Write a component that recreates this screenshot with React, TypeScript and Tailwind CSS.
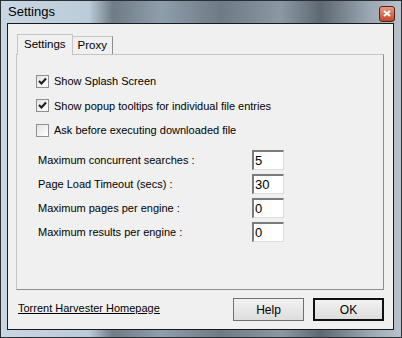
import React from "react";

const font = { fontFamily: '"Liberation Sans", Arial, sans-serif' };

const Check = ({ checked }: { checked: boolean }) => (
  <div className="w-[13px] h-[13px] border border-[#8f8f8f] bg-gradient-to-br from-[#e4e4e4] to-white flex items-center justify-center">
    {checked && (
      <svg width="9" height="9" viewBox="0 0 9 9">
        <path d="M1 4 L3.5 6.5 L8 1.5" stroke="#1b1b1b" strokeWidth="2" fill="none" />
      </svg>
    )}
  </div>
);

const NumField = ({ label, value }: { label: string; value: string }) => (
  <div className="flex items-center h-[19px]">
    <span className="w-[214px] text-[11px] text-black">{label}</span>
    <div className="w-[32px] h-[20px] bg-white border-t-2 border-l-2 border-b border-r border-t-[#7b7b7b] border-l-[#7b7b7b] border-b-[#dcdcdc] border-r-[#dcdcdc] text-[13px] leading-[17px] pl-[1px]">
      {value}
    </div>
  </div>
);

export default function App() {
  return (
    <div
      className="w-[402px] h-[338px] border border-[#2a2f36] flex flex-col bg-[linear-gradient(90deg,#c9d6e3_0%,#bccbd9_22%,#6f7b86_28%,#8f9eac_40%,#6e7a85_55%,#8b98a4_70%,#5d6872_80%,#9aa6b1_92%,#b7c2cc_100%)]"
      style={font}
    >
      <div className="h-[22px] flex items-center justify-between pl-[7px] pr-[6px]">
        <span className="text-[13px] text-black">Settings</span>
        <div className="w-[16px] h-[16px] rounded-[3px] border border-[#5a1f12] bg-gradient-to-b from-[#e89a84] to-[#c0472b] flex items-center justify-center mt-[3px]">
          <svg width="8" height="7" viewBox="0 0 8 7">
            <path d="M1 1 L7 6 M7 1 L1 6" stroke="white" strokeWidth="2" />
          </svg>
        </div>
      </div>
      <div className="flex-1 ml-[6px] mr-[7px] mb-[7px] border border-[#1a1a1a] bg-[#f0f0f0] flex flex-col pl-[8px] pr-[9px] pt-[10px]">
        <div className="flex items-end h-[20px] pl-[1px]">
          <div className="h-[21px] px-[6px] border-t border-l border-r border-[#c5c5c5] bg-[#f0f0f0] text-[11.5px] flex items-center relative -mb-[1px] z-10">
            Settings
          </div>
          <div className="h-[18px] px-[5px] border-t border-r border-[#c5c5c5] border-r-[#8e8e8e] text-[11.5px] flex items-center">
            Proxy
          </div>
        </div>
        <div className="h-[236px] border border-[#c5c5c5] border-r-[#8e8e8e] border-b-[#8e8e8e] flex flex-col pl-[19px] pt-[18px]">
          <div className="flex flex-col gap-[8px]">
            <div className="flex items-center gap-[5px]">
              <Check checked />
              <span className="text-[11px]">Show Splash Screen</span>
            </div>
            <div className="flex items-center gap-[5px]">
              <Check checked />
              <span className="text-[11px]">Show popup tooltips for individual file entries</span>
            </div>
            <div className="flex items-center gap-[5px]">
              <Check checked={false} />
              <span className="text-[11px]">Ask before executing downloaded file</span>
            </div>
          </div>
          <div className="flex flex-col gap-[5px] mt-[12px] pl-[2px]">
            <NumField label="Maximum concurrent searches :" value="5" />
            <NumField label="Page Load Timeout (secs)  :" value="30" />
            <NumField label="Maximum pages per engine :" value="0" />
            <NumField label="Maximum results per engine  :" value="0" />
          </div>
        </div>
        <div className="flex items-start mt-[8px]">
          <span className="text-[11px] underline ml-[2px] mt-[2px]">Torrent Harvester Homepage</span>
          <div className="ml-auto flex gap-[9px]">
            <div className="w-[71px] h-[23px] border border-[#707070] bg-gradient-to-b from-[#f2f2f2] to-[#dddddd] flex items-center justify-center text-[12px]">
              Help
            </div>
            <div className="w-[71px] h-[23px] border-2 border-[#111] bg-gradient-to-b from-[#f2f2f2] to-[#dddddd] flex items-center justify-center text-[12px]">
              OK
            </div>
          </div>
        </div>
      </div>
    </div>
  );
}
